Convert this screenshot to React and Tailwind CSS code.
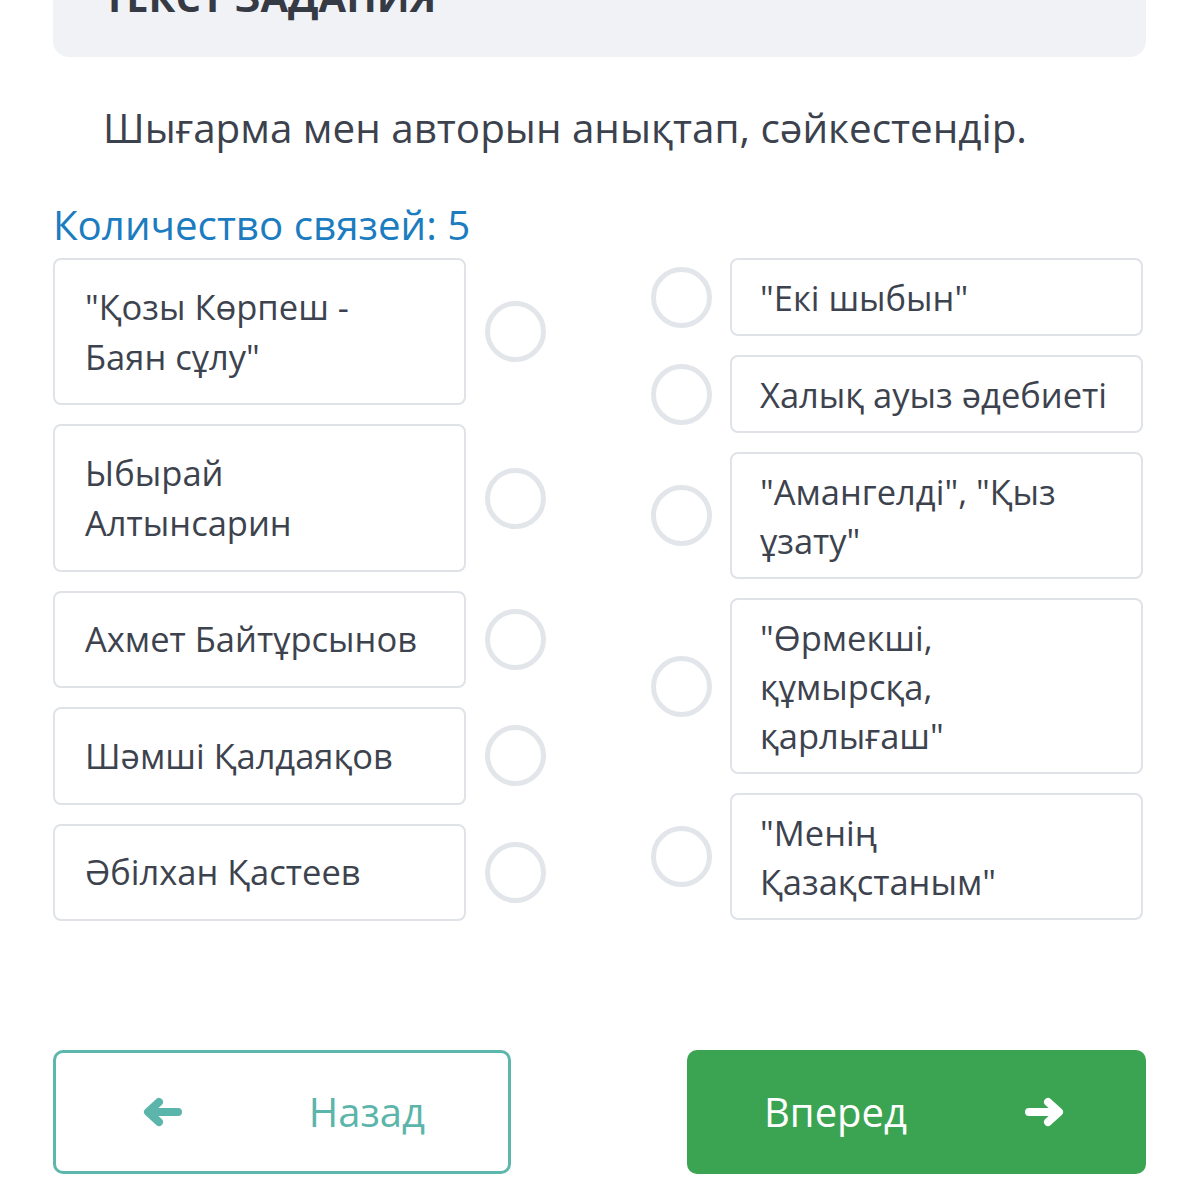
import { useState } from "react";

// Left side: works/authors, right side: answers to match
const leftItems = [
  { id: "l1", lines: ['"Қозы Көрпеш -', 'Баян сұлу"'] },
  { id: "l2", lines: ["Ыбырай", "Алтынсарин"] },
  { id: "l3", lines: ["Ахмет Байтұрсынов"] },
  { id: "l4", lines: ["Шәмші Қалдаяқов"] },
  { id: "l5", lines: ["Әбілхан Қастеев"] },
];

const rightItems = [
  { id: "r1", lines: ['"Екі шыбын"'] },
  { id: "r2", lines: ["Халық ауыз әдебиеті"] },
  { id: "r3", lines: ['"Амангелді", "Қыз', 'ұзату"'] },
  { id: "r4", lines: ['"Өрмекші,', "құмырсқа,", 'қарлығаш"'] },
  { id: "r5", lines: ['"Менің', 'Қазақстаным"'] },
];

const ArrowIcon = ({ dir = "left", className = "" }) => (
  <svg
    viewBox="0 0 40 30"
    width="40"
    height="30"
    className={className}
    style={dir === "right" ? { transform: "scaleX(-1)" } : undefined}
  >
    <path
      d="M36 15 H7 M17 5 L6 15 L17 25"
      fill="none"
      stroke="currentColor"
      strokeWidth="8"
      strokeLinecap="round"
      strokeLinejoin="round"
    />
  </svg>
);

const Dot = ({ active, onClick }) => (
  <button
    onClick={onClick}
    className={`w-[61px] h-[61px] shrink-0 rounded-full border-[5px] bg-white ${
      active ? "border-[#1b7cc0]" : "border-[#e2e5e9]"
    }`}
  />
);

const Card = ({ lines, side }) => (
  <div
    className={`flex-1 rounded-lg border-2 border-[#dfe3e7] bg-white text-[34.5px] text-[#3d434e] ${
      side === "left"
        ? "pl-[30px] py-[21.7px] leading-[50px]"
        : "pl-[28px] py-[12.5px] leading-[49px]"
    }`}
  >
    {lines.map((line) => (
      <div key={line} className="whitespace-nowrap">
        {line}
      </div>
    ))}
  </div>
);

export default function App() {
  const [selected, setSelected] = useState(null);

  return (
    <div className="min-h-[1200px] overflow-hidden bg-white px-[53px] font-['Open_Sans','Noto_Sans',sans-serif]">
      <div className="-mt-[60px] rounded-2xl bg-[#f1f2f5] pl-[50px] pt-[30px] pb-[33px]">
        <h2 className="text-[40px] leading-[54px] font-bold text-[#353a45]">
          ТЕКСТ ЗАДАНИЯ
        </h2>
      </div>

      <p className="mt-[44px] pl-[50px] text-[40.4px] leading-[54px] text-[#3c424d]">
        Шығарма мен авторын анықтап, сәйкестендір.
      </p>

      <div className="mt-[43px] text-[40.3px] leading-[54px] text-[#1b7cc0]">
        Количество связей: 5
      </div>

      <div className="mt-[6px] flex justify-between">
        <div className="w-[493px] flex flex-col gap-[19px]">
          {leftItems.map((item) => (
            <div key={item.id} className="flex items-center gap-[19px]">
              <Card lines={item.lines} side="left" />
              <Dot
                active={selected === item.id}
                onClick={() => setSelected(item.id)}
              />
            </div>
          ))}
        </div>
        <div className="w-[492px] mr-[3px] flex flex-col gap-[19px]">
          {rightItems.map((item) => (
            <div key={item.id} className="flex items-center gap-[18px]">
              <Dot
                active={selected === item.id}
                onClick={() => setSelected(item.id)}
              />
              <Card lines={item.lines} side="right" />
            </div>
          ))}
        </div>
      </div>

      <div className="mt-[129px] flex justify-between">
        <button className="w-[458px] h-[124px] flex items-center justify-between rounded-[10px] border-[3px] border-[#5db7ad] bg-white pl-[86px] pr-[83px] text-[40px] text-[#5bb5aa]">
          <ArrowIcon dir="left" />
          <span className="leading-[54px]">Назад</span>
        </button>
        <button className="w-[459px] h-[124px] flex items-center justify-between rounded-[10px] bg-[#3ba453] pl-[77px] pr-[81px] text-[40px] text-white">
          <span className="leading-[54px]">Вперед</span>
          <ArrowIcon dir="right" />
        </button>
      </div>
    </div>
  );
}
